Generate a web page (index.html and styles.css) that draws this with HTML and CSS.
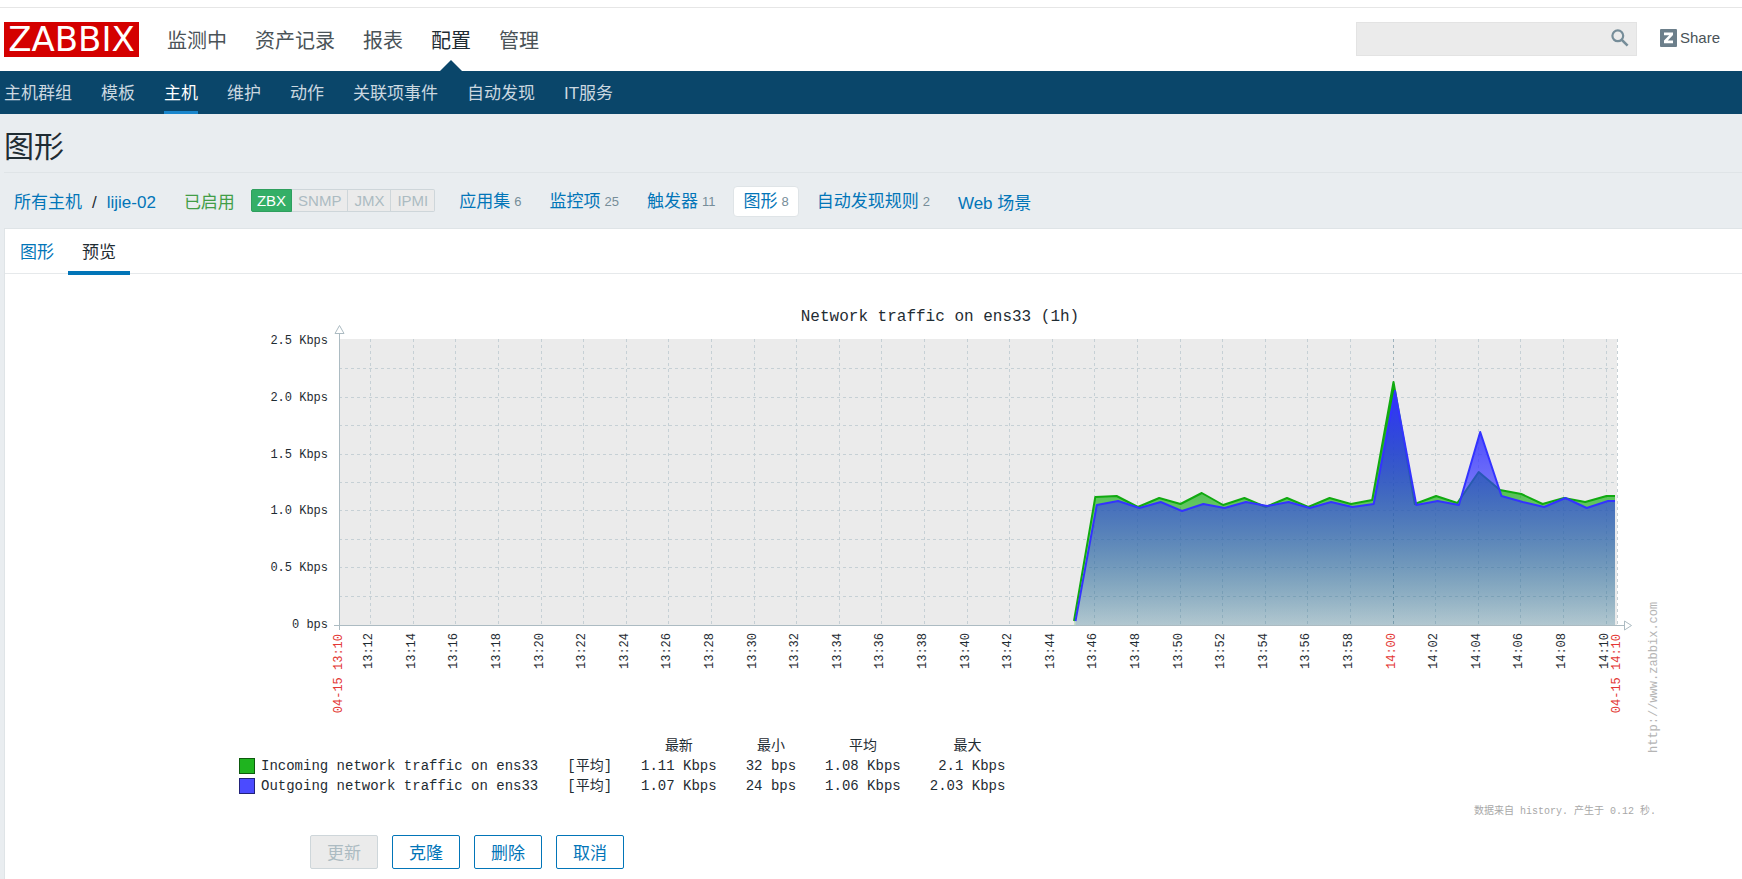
FILE: index.html
```html
<!DOCTYPE html>
<html lang="zh-CN">
<head>
<meta charset="utf-8">
<meta name="viewport" content="width=device-width, initial-scale=1">
<title>图形</title>
<link rel="stylesheet" href="styles.css">
</head>
<body>
<header class="top">
  <a class="logo" href="#">ZABBIX</a>
  <nav class="main-nav" aria-label="主菜单">
    <a href="#">监测中</a>
    <a href="#">资产记录</a>
    <a href="#">报表</a>
    <a href="#" class="selected">配置</a>
    <a href="#">管理</a>
  </nav>
  <div class="tools">
    <form class="search" role="search">
      <input type="text" aria-label="搜索">
      <button type="button" aria-label="搜索">
        <svg viewBox="0 0 18 18" width="18" height="18"><circle cx="6.8" cy="6.8" r="5.4" fill="none" stroke="#768d99" stroke-width="2.2"/><path d="M10.8 10.8l5.8 5.8" stroke="#768d99" stroke-width="2.6"/></svg>
      </button>
    </form>
    <a class="share" href="#">
      <svg viewBox="0 0 17 18" width="17" height="18" aria-hidden="true"><rect width="17" height="18" rx="1" fill="#6c7f8b"/><path d="M4 3.500h9v2.600L7.800 11.500H13v2.700H4v-2.600l5.200-5.400H4z" fill="#fff"/></svg>
      <span>Share</span>
    </a>
  </div>
</header>
<nav class="sub-nav" aria-label="配置菜单">
  <a href="#">主机群组</a>
  <a href="#">模板</a>
  <a href="#" class="selected">主机</a>
  <a href="#">维护</a>
  <a href="#">动作</a>
  <a href="#">关联项事件</a>
  <a href="#">自动发现</a>
  <a href="#">IT服务</a>
</nav>
<h1>图形</h1>
<div class="host-bar">
  <div class="crumbs plain">
    <a href="#">所有主机</a><span>/</span><a href="#">lijie-02</a>
  </div>
  <span class="enabled plain">已启用</span>
  <div class="status">
    <span class="on">ZBX</span><span>SNMP</span><span>JMX</span><span>IPMI</span>
  </div>
  <div class="links">
    <a href="#">应用集<sup>6</sup></a>
    <a href="#">监控项<sup>25</sup></a>
    <a href="#">触发器<sup>11</sup></a>
    <a href="#" class="selected">图形<sup>8</sup></a>
    <a href="#">自动发现规则<sup>2</sup></a>
    <a href="#" class="plain">Web 场景</a>
  </div>
</div>
<main class="panel">
  <nav class="tabs" aria-label="标签">
    <a href="#">图形</a>
    <a href="#" class="selected">预览</a>
  </nav>
  <div class="preview">
    <svg class="chart" id="chart" viewBox="0 0 1424 439" role="img" aria-label="Network traffic on ens33 (1h)">
      <defs>
        <linearGradient id="in-fill" gradientUnits="userSpaceOnUse" x1="0" y1="95" x2="0" y2="329">
          <stop offset="0" stop-color="#00aa00"/>
          <stop offset="1" stop-color="#00aa00" stop-opacity="0.15"/>
        </linearGradient>
        <linearGradient id="out-fill" gradientUnits="userSpaceOnUse" x1="0" y1="95" x2="0" y2="329">
          <stop offset="0" stop-color="#3333ff"/>
          <stop offset="1" stop-color="#3333ff" stop-opacity="0.15"/>
        </linearGradient>
      </defs>
    </svg>
    <table class="legend">
      <thead>
        <tr><td></td><td></td><th scope="col">最新</th><th scope="col">最小</th><th scope="col">平均</th><th scope="col">最大</th></tr>
      </thead>
      <tbody>
        <tr><th scope="row"><i class="swatch in"></i>Incoming network traffic on ens33</th><td>[平均]</td><td>1.11 Kbps</td><td>32 bps</td><td>1.08 Kbps</td><td>2.1 Kbps</td></tr>
        <tr><th scope="row"><i class="swatch out"></i>Outgoing network traffic on ens33</th><td>[平均]</td><td>1.07 Kbps</td><td>24 bps</td><td>1.06 Kbps</td><td>2.03 Kbps</td></tr>
      </tbody>
    </table>
    <p class="source">数据来自 history. 产生于 0.12 秒.</p>
    <div class="actions">
      <button type="button" disabled>更新</button>
      <button type="button">克隆</button>
      <button type="button">删除</button>
      <button type="button">取消</button>
    </div>
  </div>
</main>
<script src="chart.js"></script>
</body>
</html>
```
FILE: styles.css
```css
* { box-sizing: border-box; }

body {
  margin: 0;
  padding-top: 7px;
  min-height: 100vh;
  display: flex;
  flex-direction: column;
  background: #fff;
  color: #1f2c33;
  font: 17px/20px "Liberation Sans", "Noto Sans CJK SC", sans-serif;
}

a { color: #0275b8; text-decoration: none; }

.top {
  display: flex;
  align-items: center;
  height: 64px;
  padding: 0 22px 0 4px;
  border-top: 1px solid #e6e6e6;
}

.logo {
  width: 135px;
  height: 35px;
  background: #d40000;
  color: #fff;
  font: 34px/35px "DejaVu Sans", sans-serif;
  text-align: center;
}

.main-nav {
  display: flex;
  gap: 28px;
  height: 100%;
  margin-left: 28px;
  font-size: 20px;
  line-height: 66px;
}
.main-nav a { color: #4a5358; }
.main-nav .selected { position: relative; color: #1f2c33; }
.main-nav .selected::after {
  content: "";
  position: absolute;
  left: 9px;
  bottom: 0;
  border: 11px solid transparent;
  border-top-width: 0;
  border-bottom-color: #0a466a;
}

.tools {
  display: flex;
  flex: 1;
  justify-content: flex-end;
  padding-bottom: 2px;
}

.search {
  position: relative;
  display: flex;
  width: 281px;
  height: 34px;
}
.search input {
  width: 100%;
  padding: 0 32px 0 8px;
  border: 1px solid #e3e3e3;
  background: #ebebeb;
  font: inherit;
}
.search button {
  position: absolute;
  right: 8px;
  top: 7px;
  padding: 0;
  border: 0;
  background: none;
  line-height: 0;
}

.share {
  display: flex;
  align-items: center;
  gap: 3px;
  height: 32px;
  margin-left: 23px;
  color: #4a5358;
  font-size: 15px;
}

.sub-nav {
  display: flex;
  gap: 29px;
  height: 43px;
  padding-left: 4px;
  background: #0a466a;
  line-height: 45px;
}
.sub-nav a { height: 44px; color: #cbd8e0; }
.sub-nav .selected { color: #fff; border-bottom: 4px solid #1a86cc; }

h1 {
  margin: 0;
  padding: 13px 0 0 4px;
  height: 58px;
  background: #e9edf0;
  font-size: 30px;
  font-weight: 400;
  line-height: 40px;
}

.host-bar {
  display: flex;
  align-items: center;
  height: 56px;
  padding: 2px 0 0 14px;
  background: linear-gradient(#dfe4e7, #dfe4e7) 4px 0 / 100% 1px no-repeat #e9edf0;
}
.host-bar .plain { padding-top: 3px; }
.crumbs { display: flex; }
.crumbs span { margin: 0 10px; }
.enabled { margin: 0 16px 0 28px; color: #429e47; }

.status {
  display: flex;
  height: 23px;
  margin-bottom: 2px;
  border-radius: 2px;
  font-size: 15px;
  line-height: 21px;
}
.status span {
  padding: 0 6px;
  border: 1px solid #ced6da;
  border-left-width: 0;
  background: #ebebeb;
  color: #acbbc2;
}
.status span:last-child { border-radius: 0 2px 2px 0; }
.status .on {
  padding: 0 5px;
  border-color: #2f9f5e;
  border-left-width: 1px;
  border-radius: 2px 0 0 2px;
  background: #34af67;
  color: #fff;
}

.links { display: flex; gap: 8px; margin-left: 14px; }
.links a {
  display: flex;
  padding: 5px 9px 4px;
  border: 1px solid transparent;
}
.host-bar .links .plain { padding-top: 7px; padding-bottom: 2px; }
.links .selected {
  border-color: #dfe4e7;
  border-radius: 4px;
  background: #fff;
}
.links sup {
  margin-left: 4px;
  color: #768d99;
  font-size: 13px;
  line-height: 20px;
}

.panel {
  flex: 1;
  border-top: 1px solid #dfe4e7;
  border-left: 1px solid #dfe4e7;
  box-shadow: -4px 0 0 #e9edf0;
  margin-left: 4px;
}

.tabs {
  display: flex;
  height: 45px;
  padding-left: 1px;
  border-bottom: 1px solid #e6e9eb;
  line-height: 48px;
}
.tabs a { height: 46px; padding: 0 14px; }
.tabs .selected { color: #1f2c33; border-bottom: 4px solid #0275b8; }

.preview { padding: 22px 79px 10px 234px; }

.chart {
  display: block;
  width: 100%;
  height: auto;
  overflow: visible;
  font-family: "Liberation Mono", monospace;
  font-size: 12px;
  fill: #1f2c33;
}
.chart .title { font-size: 16px; text-anchor: middle; }
.chart .label { text-anchor: end; }
.chart .main { fill: #e33734; }
.chart .watermark { fill: #b5b5b5; }
.chart .plot { fill: #ebebeb; }
.chart .grid { fill: none; stroke: #c6d0d5; stroke-dasharray: 3 3; }
.chart .grid-main { stroke: #9fb3bd; }
.chart .axis { fill: none; stroke: #acbbc2; }
.chart .head { fill: #fff; stroke: #acbbc2; }
.chart .area-in { fill: url(#in-fill); }
.chart .area-out { fill: url(#out-fill); }
.chart .line { fill: none; stroke-width: 2; stroke-linejoin: round; }
.chart .line-in { stroke: #10aa10; }
.chart .line-out { stroke: #3333ff; }

.legend {
  margin-top: 1px;
  border-collapse: collapse;
  font: 14px/20px "Liberation Mono", "Noto Sans CJK SC", monospace;
  white-space: nowrap;
}
.legend th, .legend td {
  height: 20px;
  padding: 0 0 0 29px;
  font-weight: 400;
  text-align: right;
}
.legend thead th { text-align: center; }
.legend tbody th { display: flex; align-items: center; padding: 0; }
.swatch {
  width: 16px;
  height: 16px;
  margin-right: 6px;
  border: 1px solid #1f2c33;
}
.swatch.in { background: #1fb41f; border-color: #0d5a0d; }
.swatch.out { background: #4b4bff; border-color: #22227a; }

.source {
  margin: 8px 7px 0 0;
  color: #a8a8a8;
  font: 10px/16px "Liberation Mono", "Noto Sans CJK SC", monospace;
  text-align: right;
}

.actions { display: flex; gap: 14px; margin: 15px 0 0 71px; }
.actions button {
  min-width: 68px;
  height: 34px;
  padding: 3px 16px 0;
  border: 1px solid #0275b8;
  border-radius: 2px;
  background: #fff;
  color: #0275b8;
  font: inherit;
}
.actions button:disabled {
  border-color: #ced6da;
  background: #ebebeb;
  color: #acbbc2;
}
```
FILE: chart.js
```js
(function () {
  var svg = document.getElementById('chart');
  var NS = 'http://www.w3.org/2000/svg';
  var LEFT = 100, RIGHT = 1378, TOP = 43, BOTTOM = 329;

  function add(name, attrs, text) {
    var node = document.createElementNS(NS, name);
    Object.keys(attrs).forEach(function (key) { node.setAttribute(key, attrs[key]); });
    if (text) node.textContent = text;
    svg.appendChild(node);
  }

  function vertical(x, y, text, cls) {
    add('text', { 'class': cls, transform: 'translate(' + x + ' ' + y + ') rotate(-90)' }, text);
  }

  add('text', { 'class': 'title', x: 701, y: 25 }, 'Network traffic on ens33 (1h)');
  add('rect', { 'class': 'plot', x: LEFT, y: TOP, width: RIGHT - LEFT, height: BOTTOM - TOP });

  // Horizontal grid: a line every 0.25 Kbps, a label every 0.5 Kbps
  for (var i = 0; i <= 10; i++) {
    var y = Math.round(328 - i * 28.4);
    if (i > 0 && i < 10) add('path', { 'class': 'grid', d: 'M' + LEFT + ' ' + (y + 0.5) + 'H' + RIGHT });
    if (i % 2 === 0) {
      add('text', { 'class': 'label', x: 89, y: y + 4 }, i ? (i / 4).toFixed(1) + ' Kbps' : '0 bps');
    }
  }

  // Vertical grid: a line every two minutes from 13:12
  for (var n = 0; n < 30; n++) {
    var minutes = 12 + n * 2;
    var x = Math.round(131.2 + n * 42.6);
    var onHour = minutes === 60;
    var mm = minutes % 60;
    var time = (minutes < 60 ? '13:' : '14:') + (mm < 10 ? '0' : '') + mm;
    add('path', { 'class': 'grid' + (onHour ? ' grid-main' : ''), d: 'M' + (x + 0.5) + ' ' + TOP + 'V' + BOTTOM });
    vertical(x + 2, 337, time, 'label' + (onHour ? ' main' : ''));
  }
  add('path', { 'class': 'grid', d: 'M1378.5 ' + TOP + 'V' + BOTTOM });
  vertical(103, 338, '04-15 13:10', 'label main');
  vertical(1381, 338, '04-15 14:10', 'label main');

  var incoming = [325, 201, 200, 211, 202, 208, 197, 209, 202, 211, 202, 211, 202, 208, 204, 86, 208, 200, 207, 176, 194, 198, 208, 202, 206, 200, 200];
  var outgoing = [325, 209, 205, 212, 206, 215, 208, 212, 206, 210, 206, 212, 206, 211, 208, 95, 209, 205, 209, 136, 200, 206, 211, 202, 212, 205, 205];

  function series(values, start, name) {
    var points = values.map(function (v, k) {
      return Math.min(start + k * 21.3, 1376).toFixed(1) + ' ' + v;
    }).join('L');
    add('path', { 'class': 'area-' + name, d: 'M' + start + ' ' + BOTTOM + 'L' + points + 'V' + BOTTOM + 'Z' });
    add('path', { 'class': 'line line-' + name, d: 'M' + points });
  }
  series(incoming, 835, 'in');
  series(outgoing, 836.5, 'out');

  add('path', { 'class': 'axis', d: 'M100.5 37V334M95 329.5H1385' });
  add('path', { 'class': 'head', d: 'M96 37.5h9l-4.500-8z' });
  add('path', { 'class': 'head', d: 'M1385.500 325v9l7-4.500z' });

  vertical(1418, 457, 'http://www.zabbix.com', 'watermark');
})();
```
